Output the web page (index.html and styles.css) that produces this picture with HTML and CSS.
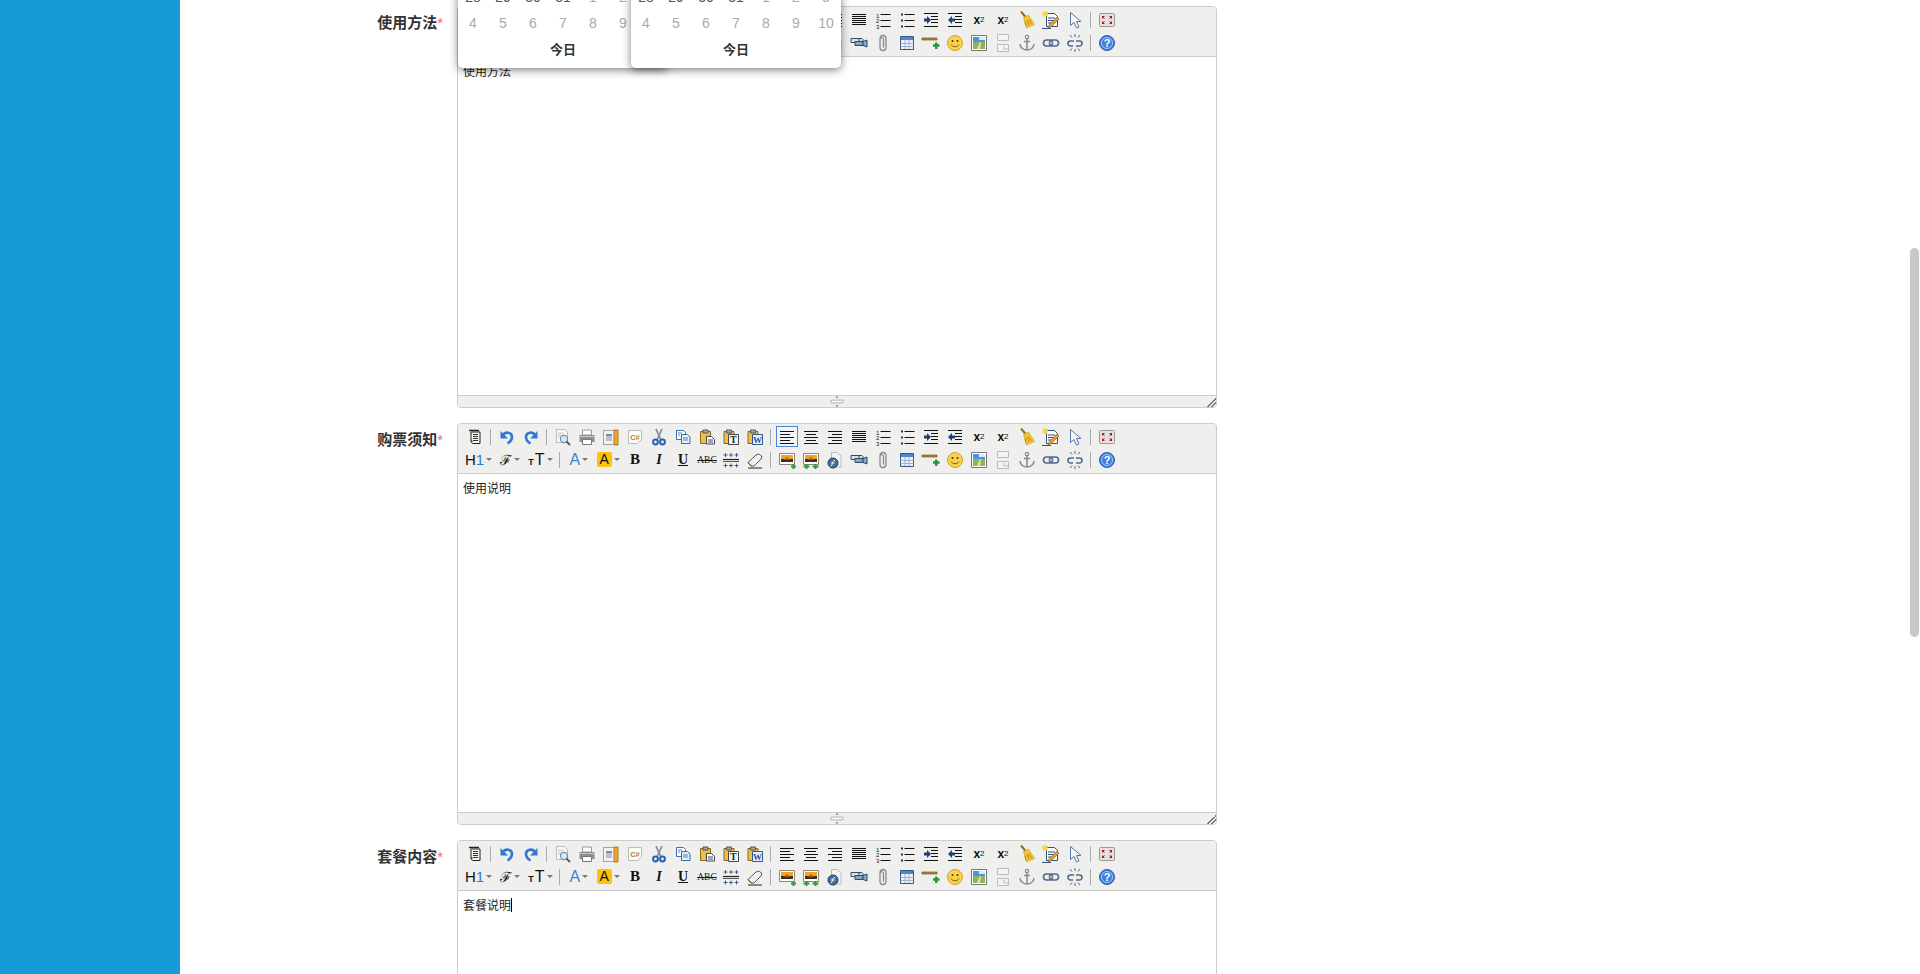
FILE: index.html
```html
<!DOCTYPE html>
<html lang="zh-CN">
<head>
    <meta charset="UTF-8">
    <title>套餐编辑</title>
    <link rel="stylesheet" href="styles.css">
</head>
<body>
    <svg class="icon-defs" xmlns="http://www.w3.org/2000/svg">
        <symbol id="i-source" viewBox="0 0 20 20"><path d="M6 5h9v11.500H7.500L6 15z" fill="#f4f4ee" stroke="#222"/><path d="M4 3.500h10" stroke="#222" stroke-width="1.500"/><path d="M8 7.500h5M8 9.500h5M8 11.500h5M8 13.500h5" stroke="#333"/><path d="M6 12.500l2 2-2 2z" fill="#555"/></symbol>
        <symbol id="i-undo" viewBox="0 0 20 20"><path d="M5.500 8.500c3-4.500 9.500-3.500 9.500 1.500 0 3-2 5-4.500 6.500" fill="none" stroke="#2f7ad0" stroke-width="2.600"/><path d="M3.500 4v7.500h7.500z" fill="#2f7ad0"/></symbol>
        <symbol id="i-redo" viewBox="0 0 20 20"><path d="M14.500 8.500c-3-4.500-9.500-3.500-9.500 1.500 0 3 2 5 4.500 6.500" fill="none" stroke="#2f7ad0" stroke-width="2.600"/><path d="M16.500 4v7.500H9z" fill="#2f7ad0"/></symbol>
        <symbol id="i-preview" viewBox="0 0 20 20"><path d="M3.500 2.500h8l3 3v10h-11z" fill="#fafafa" stroke="#bbb"/><path d="M5 6h6M5 8h4M5 10h3" stroke="#c8c8c8"/><circle cx="11" cy="12" r="3.600" fill="#d8e8f6" stroke="#7790a8" stroke-width="1.200"/><path d="M13.500 14.500l3.500 3.500" stroke="#555" stroke-width="1.800"/></symbol>
        <symbol id="i-print" viewBox="0 0 20 20"><path d="M5.500 3h9v5h-9z" fill="#fff" stroke="#999"/><path d="M2.500 8h15v7h-15z" fill="#8a8f94"/><path d="M3 9.500h14" stroke="#c6c8ca"/><path d="M5.500 12.500h9v5h-9z" fill="#fff" stroke="#777"/></symbol>
        <symbol id="i-template" viewBox="0 0 20 20"><path d="M2.500 3.500h14v14h-14z" fill="#f2f2f2" stroke="#555" stroke-dasharray="1 1"/><path d="M13 3h4v15h-4z" fill="#e8a53a" stroke="#b87a1a"/><path d="M5 7h6v2.500H5z" fill="#6f8fb5"/><path d="M5 11h6M5 13h6" stroke="#7f93ab"/></symbol>
        <symbol id="i-code" viewBox="0 0 20 20"><path d="M3.500 3.500h13v9l-4 4h-9z" fill="#fbfbf8" stroke="#bbb"/><text x="10" y="12.500" text-anchor="middle" font-family="Liberation Sans" font-size="7.500" font-weight="700" fill="#b5823a">C#</text></symbol>
        <symbol id="i-cut" viewBox="0 0 20 20"><path d="M7 2l5 11M13 2L8 13" stroke="#8a8f98" stroke-width="1.800"/><circle cx="6.500" cy="15" r="2.400" fill="none" stroke="#2d5fb0" stroke-width="2"/><circle cx="13.500" cy="15" r="2.400" fill="none" stroke="#2d5fb0" stroke-width="2"/></symbol>
        <symbol id="i-copy" viewBox="0 0 20 20"><path d="M3.500 3.500h7l2 2v7h-9z" fill="#fff" stroke="#3a6db0"/><path d="M8.500 7.500h6l2.500 2.500v6.500H8.500z" fill="#e6f0fa" stroke="#3a6db0"/><path d="M10 11h5M10 13h5M5 6h4M5 8h2" stroke="#4f83c0"/></symbol>
        <symbol id="i-paste" viewBox="0 0 20 20"><path d="M3.500 4.500h10v12h-10z" fill="#e8c04a" stroke="#8a6a1c"/><path d="M6 3h5v3H6z" fill="#aaa" stroke="#555"/><path d="M9.500 9.500h5l3 3v4.500h-8z" fill="#fff" stroke="#445"/><path d="M11 13h5M11 15h5" stroke="#445"/></symbol>
        <symbol id="i-pastetext" viewBox="0 0 20 20"><path d="M3 4.500h10v12H3z" fill="#e8c04a" stroke="#8a6a1c"/><path d="M5.500 3h5v3h-5z" fill="#aaa" stroke="#555"/><path d="M7.500 7.500h10v10h-10z" fill="#f4f4f4" stroke="#445"/><text x="12.500" y="16" text-anchor="middle" font-family="Liberation Serif" font-size="9.500" font-weight="700" fill="#222">T</text></symbol>
        <symbol id="i-pasteword" viewBox="0 0 20 20"><path d="M3 4.500h10v12H3z" fill="#e8c04a" stroke="#8a6a1c"/><path d="M5.500 3h5v3h-5z" fill="#aaa" stroke="#555"/><path d="M7.500 7.500h10v10h-10z" fill="#e8eef8" stroke="#34588c"/><text x="12.500" y="16" text-anchor="middle" font-family="Liberation Serif" font-size="9" font-weight="700" fill="#1f55b0">W</text></symbol>
        <symbol id="i-left" viewBox="0 0 20 20"><path d="M3 4.500h14M3 7.500h10M3 10.500h14M3 13.500h10M3 16.500h14" stroke="#111"/></symbol>
        <symbol id="i-center" viewBox="0 0 20 20"><path d="M3 4.500h14M5 7.500h10M3 10.500h14M5 13.500h10M3 16.500h14" stroke="#111"/></symbol>
        <symbol id="i-right" viewBox="0 0 20 20"><path d="M3 4.500h14M7 7.500h10M3 10.500h14M7 13.500h10M3 16.500h14" stroke="#111"/></symbol>
        <symbol id="i-justify" viewBox="0 0 20 20"><path d="M3 4.500h14M3 6.500h14M3 8.500h14M3 10.500h14M3 12.500h14M3 14.500h14" stroke="#111"/></symbol>
        <symbol id="i-ol" viewBox="0 0 20 20"><text x="3" y="7.500" font-family="Liberation Sans" font-size="6" fill="#111">1</text><text x="3" y="13" font-family="Liberation Sans" font-size="6" fill="#111">2</text><text x="3" y="18.500" font-family="Liberation Sans" font-size="6" fill="#111">3</text><path d="M7.500 4.500h10M7.500 10.500h10M7.500 16.500h10" stroke="#111"/></symbol>
        <symbol id="i-ul" viewBox="0 0 20 20"><path d="M4 3.500h2v2H4zM4 9.500h2v2H4zM4 15.500h2v2H4z" fill="#333"/><path d="M7.500 4.500h10M7.500 10.500h10M7.500 16.500h10" stroke="#111"/></symbol>
        <symbol id="i-indent" viewBox="0 0 20 20"><path d="M3 3.500h14M10 6.500h7M10 9.500h7M10 12.500h7M3 16.500h14" stroke="#111"/><path d="M3 8.500h3V6l4 4-4 4v-2.500H3z" fill="#20407a"/></symbol>
        <symbol id="i-outdent" viewBox="0 0 20 20"><path d="M3 3.500h14M10 6.500h7M10 9.500h7M10 12.500h7M3 16.500h14" stroke="#111"/><path d="M10 8.500H7V6l-4 4 4 4v-2.500h3z" fill="#20407a"/></symbol>
        <symbol id="i-clean" viewBox="0 0 20 20"><path d="M4 1.500l5 6" stroke="#9a6a2a" stroke-width="2"/><path d="M6.500 7.500l5-2.500 6 9.500-8 3.500z" fill="#f2c52e" stroke="#c79a1c" stroke-width=".6"/><path d="M9 16l-1-4M12 15l-2-5M14.500 14l-2.500-4" stroke="#b98a18"/></symbol>
        <symbol id="i-edit" viewBox="0 0 20 20"><path d="M5.500 3.500h8l3 3v10h-11z" fill="#fbfbf6" stroke="#34507c"/><path d="M7 8h7M7 10.500h6M7 13h4" stroke="#34507c"/><path d="M1.500 1.500h5v5h-5z" fill="#f5d94a"/><path d="M8 15l8-8 2 2-8 8-3 1z" fill="#e39a3a" stroke="#8a5a1a" stroke-width=".6"/><path d="M1 18.500h9" stroke="#34507c"/></symbol>
        <symbol id="i-cursor" viewBox="0 0 20 20"><path d="M5.500 2.500v13l3.500-3 2.500 5.500 2.500-1-2.500-5.500h4.500z" fill="#f2f5fa" stroke="#5c76a5"/></symbol>
        <symbol id="i-fullscreen" viewBox="0 0 20 20"><rect x="2.500" y="3.500" width="15" height="13" rx="1" fill="#e2e2e2" stroke="#999"/><path d="M5 6.500l2.500 2M12.500 8.500l2.500-2M5 13.500l2.500-2M15 13.500l-2.500-2" stroke="#b01818"/><path d="M5 6h3L5 9zM15 6h-3l3 3zM5 14h3l-3-3zM15 14h-3l3-3z" fill="#b01818"/></symbol>
        <symbol id="i-eraser" viewBox="0 0 20 20"><path d="M3 12.500L11 5c1.500-1 3-1 4.500 0s1.500 3 .5 4l-7 7H6z" fill="#eef1f6" stroke="#555"/><path d="M3 12.500L6.500 16" stroke="#555"/><path d="M3 18h14" stroke="#222"/></symbol>
        <symbol id="i-grid" viewBox="0 0 20 20"><path d="M2 9.500h16" stroke="#222" stroke-width="1.200"/><path d="M2 11.500h16" stroke="#555"/><path d="M4.500 3v4M2.500 5h4M10 3v4M8 5h4M15.500 3v4M13.500 5h4M4.500 13.500v4M2.500 15.500h4M10 13.500v4M8 15.500h4M15.500 13.500v4M13.500 15.500h4" stroke="#20407a" stroke-width=".8"/></symbol>
        <symbol id="i-image" viewBox="0 0 20 20"><path d="M2.500 3.500h15v11h-15z" fill="#fff" stroke="#888"/><path d="M4 5h12v4H4z" fill="#f4a21e"/><path d="M4 9h12v3H4z" fill="#332"/><path d="M7 10l3-3 3 3z" fill="#c8501a"/><path d="M14 16.500h5M16.500 14v5" stroke="#2e9a2e" stroke-width="2"/></symbol>
        <symbol id="i-multi" viewBox="0 0 20 20"><path d="M2.500 3.500h15v11h-15z" fill="#fff" stroke="#888"/><path d="M4 5h12v4H4z" fill="#f4a21e"/><path d="M4 9h12v3H4z" fill="#332"/><path d="M7 10l3-3 3 3z" fill="#c8501a"/><path d="M2.500 16.500h6M5.500 14v5M11.500 16.500h6M14.500 14v5" stroke="#2e9a2e" stroke-width="2"/></symbol>
        <symbol id="i-flash" viewBox="0 0 20 20"><path d="M6.500 2.500h6l3.500 3.500v11H6.500z" fill="#f4f4f4" stroke="#bbb"/><circle cx="8" cy="13" r="5" fill="#3f6f9e" stroke="#1e3f66"/><path d="M10 10.500c-2 0-2 1.500-2.500 3s-1 2.500-2 2.500M6 13h3.500" stroke="#fff" fill="none"/></symbol>
        <symbol id="i-video" viewBox="0 0 20 20"><path d="M2 5.500h11l1 1v2H6v1H2z" fill="#d9e2ea" stroke="#2c4d72"/><path d="M6 8.500h8v4H6z" fill="#8ba6c0" stroke="#2c4d72"/><path d="M14 8.500l4-1.500v7l-4-1.500z" fill="#8ba6c0" stroke="#2c4d72"/><circle cx="10" cy="7" r="1" fill="#3ca04a"/></symbol>
        <symbol id="i-attach" viewBox="0 0 20 20"><path d="M7 5.500c0-4 6-4 6 0v9c0 4-6 4-6 0V6.500c0-2.500 3.500-2.500 3.500 0v8" fill="none" stroke="#888" stroke-width="1.300"/></symbol>
        <symbol id="i-table" viewBox="0 0 20 20"><path d="M3.500 3.500h13v13h-13z" fill="#eef2f8" stroke="#34588c"/><path d="M4 4h12v3H4z" fill="#4f86cf"/><path d="M3.500 10.500h13M3.500 13.500h13M8 7v9M12 7v9" stroke="#9db3cf"/></symbol>
        <symbol id="i-hr" viewBox="0 0 20 20"><path d="M1 5h15v2H1z" fill="#b58a3c" stroke="#5a4318" stroke-width=".6"/><path d="M12 12.500h6.500M15.250 9.500v6.500" stroke="#1f9a2c" stroke-width="2.400"/></symbol>
        <symbol id="i-emoji" viewBox="0 0 20 20"><circle cx="10" cy="10" r="7.500" fill="#f8d24a" stroke="#d9a126"/><circle cx="7.500" cy="8" r="1" fill="#333"/><circle cx="12.500" cy="8" r="1" fill="#333"/><path d="M6 11.500c1.500 3 6.500 3 8 0" fill="none" stroke="#8a5a12"/></symbol>
        <symbol id="i-map" viewBox="0 0 20 20"><path d="M2.500 2.500h15v15h-15z" fill="#fff" stroke="#777"/><path d="M4 4h12v12H4z" fill="#8db65a"/><path d="M4 4h12v5H4z" fill="#4f94dc"/><path d="M10 4h6v3h-6z" fill="#dfeaf6"/><path d="M8 16l3-7h1l-1 7z" fill="#e8e2b8"/></symbol>
        <symbol id="i-pagebreak" viewBox="0 0 20 20"><path d="M4.500 1.500h11v6h-11z" fill="#f4f4f4" stroke="#bbb"/><path d="M4.500 11.500h11v7h-11z" fill="#f4f4f4" stroke="#bbb"/><path d="M11 13v3h4.500" fill="none" stroke="#bbb"/></symbol>
        <symbol id="i-anchor" viewBox="0 0 20 20"><circle cx="10" cy="4" r="1.700" fill="none" stroke="#8b8b8b" stroke-width="1.200"/><path d="M10 6v11M7 8.500h6M3 11c0 4 4 6 7 6s7-2 7-6" fill="none" stroke="#8b8b8b" stroke-width="1.500"/></symbol>
        <symbol id="i-link" viewBox="0 0 20 20"><rect x="2.500" y="7" width="9" height="6" rx="3" fill="none" stroke="#52688a" stroke-width="1.600"/><rect x="8.500" y="7" width="9" height="6" rx="3" fill="none" stroke="#52688a" stroke-width="1.600"/><path d="M7 10h6" stroke="#a9b8cc"/></symbol>
        <symbol id="i-unlink" viewBox="0 0 20 20"><path d="M9 8H5.500a2.500 2.500 0 000 5H8M11 8h3.500a2.500 2.500 0 010 5H11" fill="none" stroke="#52688a" stroke-width="1.600"/><path d="M10 1v3M10 16v3M5 2l2 2.500M15 2l-2 2.500M5 18l2-2.500M15 18l-2-2.500" stroke="#52688a"/></symbol>
        <symbol id="i-help" viewBox="0 0 20 20"><circle cx="10" cy="10" r="7.500" fill="#3f7ee0" stroke="#2a5cb0"/><circle cx="10" cy="10" r="5.500" fill="none" stroke="#a8c8f4"/><text x="10" y="14" text-anchor="middle" font-family="Liberation Sans" font-size="11" font-weight="700" fill="#fff">?</text></symbol>
        <symbol id="i-scale" viewBox="0 0 16 12"><path d="M8 0l1.500 2h-3zM8 12l-1.500-2h3z" fill="#666"/><path d="M1.500 4.500h13v3h-13z" fill="#fff" stroke="#aaa"/></symbol>
    </svg>

    <aside class="sidebar"></aside>

    <main class="content">
        <div class="form-row">
            <label class="form-label">使用方法<span class="required">*</span></label>
            <div class="editor">
                <div class="toolbar">
                    <div class="toolbar-row">
                        <span class="btn"><svg><use href="#i-source"/></svg></span><span class="sep"></span>
                        <span class="btn"><svg><use href="#i-undo"/></svg></span><span class="btn"><svg><use href="#i-redo"/></svg></span><span class="sep"></span>
                        <span class="btn"><svg><use href="#i-preview"/></svg></span><span class="btn"><svg><use href="#i-print"/></svg></span><span class="btn"><svg><use href="#i-template"/></svg></span><span class="btn"><svg><use href="#i-code"/></svg></span><span class="btn"><svg><use href="#i-cut"/></svg></span><span class="btn"><svg><use href="#i-copy"/></svg></span><span class="btn"><svg><use href="#i-paste"/></svg></span><span class="btn"><svg><use href="#i-pastetext"/></svg></span><span class="btn"><svg><use href="#i-pasteword"/></svg></span><span class="sep"></span>
                        <span class="btn"><svg><use href="#i-left"/></svg></span><span class="btn"><svg><use href="#i-center"/></svg></span><span class="btn"><svg><use href="#i-right"/></svg></span><span class="btn"><svg><use href="#i-justify"/></svg></span><span class="btn"><svg><use href="#i-ol"/></svg></span><span class="btn"><svg><use href="#i-ul"/></svg></span><span class="btn"><svg><use href="#i-indent"/></svg></span><span class="btn"><svg><use href="#i-outdent"/></svg></span>
                        <span class="btn txt-script">x<sub>2</sub></span><span class="btn txt-script">x<sup>2</sup></span><span class="btn"><svg><use href="#i-clean"/></svg></span><span class="btn"><svg><use href="#i-edit"/></svg></span><span class="btn"><svg><use href="#i-cursor"/></svg></span><span class="sep"></span>
                        <span class="btn"><svg><use href="#i-fullscreen"/></svg></span>
                    </div>
                    <div class="toolbar-row">
                        <span class="btn btn-wide"><span class="txt-h1">H<em>1</em></span><i class="arrow"></i></span><span class="btn btn-wide"><span class="txt-font">ℱ</span><i class="arrow"></i></span><span class="btn btn-wide"><span class="txt-size"><small>T</small>T</span><i class="arrow"></i></span><span class="sep"></span>
                        <span class="btn btn-color"><span class="txt-color">A</span><i class="arrow"></i></span><span class="btn btn-color"><span class="txt-hilite">A</span><i class="arrow"></i></span>
                        <span class="btn txt-b">B</span><span class="btn txt-i">I</span><span class="btn txt-u">U</span><span class="btn txt-abc">ABC</span><span class="btn"><svg><use href="#i-grid"/></svg></span><span class="btn"><svg><use href="#i-eraser"/></svg></span><span class="sep"></span>
                        <span class="btn"><svg><use href="#i-image"/></svg></span><span class="btn"><svg><use href="#i-multi"/></svg></span><span class="btn"><svg><use href="#i-flash"/></svg></span><span class="btn"><svg><use href="#i-video"/></svg></span><span class="btn"><svg><use href="#i-attach"/></svg></span><span class="btn"><svg><use href="#i-table"/></svg></span><span class="btn"><svg><use href="#i-hr"/></svg></span><span class="btn"><svg><use href="#i-emoji"/></svg></span><span class="btn"><svg><use href="#i-map"/></svg></span><span class="btn"><svg><use href="#i-pagebreak"/></svg></span><span class="btn"><svg><use href="#i-anchor"/></svg></span><span class="btn"><svg><use href="#i-link"/></svg></span><span class="btn"><svg><use href="#i-unlink"/></svg></span><span class="sep"></span>
                        <span class="btn"><svg><use href="#i-help"/></svg></span>
                    </div>
                </div>
                <div class="editor-body">使用方法</div>
                <div class="statusbar"><svg class="scale-icon"><use href="#i-scale"/></svg><i class="resize-corner"></i></div>
            </div>
        </div>

        <div class="form-row">
            <label class="form-label">购票须知<span class="required">*</span></label>
            <div class="editor">
                <div class="toolbar">
                    <div class="toolbar-row">
                        <span class="btn"><svg><use href="#i-source"/></svg></span><span class="sep"></span>
                        <span class="btn"><svg><use href="#i-undo"/></svg></span><span class="btn"><svg><use href="#i-redo"/></svg></span><span class="sep"></span>
                        <span class="btn"><svg><use href="#i-preview"/></svg></span><span class="btn"><svg><use href="#i-print"/></svg></span><span class="btn"><svg><use href="#i-template"/></svg></span><span class="btn"><svg><use href="#i-code"/></svg></span><span class="btn"><svg><use href="#i-cut"/></svg></span><span class="btn"><svg><use href="#i-copy"/></svg></span><span class="btn"><svg><use href="#i-paste"/></svg></span><span class="btn"><svg><use href="#i-pastetext"/></svg></span><span class="btn"><svg><use href="#i-pasteword"/></svg></span><span class="sep"></span>
                        <span class="btn btn-active"><svg><use href="#i-left"/></svg></span><span class="btn"><svg><use href="#i-center"/></svg></span><span class="btn"><svg><use href="#i-right"/></svg></span><span class="btn"><svg><use href="#i-justify"/></svg></span><span class="btn"><svg><use href="#i-ol"/></svg></span><span class="btn"><svg><use href="#i-ul"/></svg></span><span class="btn"><svg><use href="#i-indent"/></svg></span><span class="btn"><svg><use href="#i-outdent"/></svg></span>
                        <span class="btn txt-script">x<sub>2</sub></span><span class="btn txt-script">x<sup>2</sup></span><span class="btn"><svg><use href="#i-clean"/></svg></span><span class="btn"><svg><use href="#i-edit"/></svg></span><span class="btn"><svg><use href="#i-cursor"/></svg></span><span class="sep"></span>
                        <span class="btn"><svg><use href="#i-fullscreen"/></svg></span>
                    </div>
                    <div class="toolbar-row">
                        <span class="btn btn-wide"><span class="txt-h1">H<em>1</em></span><i class="arrow"></i></span><span class="btn btn-wide"><span class="txt-font">ℱ</span><i class="arrow"></i></span><span class="btn btn-wide"><span class="txt-size"><small>T</small>T</span><i class="arrow"></i></span><span class="sep"></span>
                        <span class="btn btn-color"><span class="txt-color">A</span><i class="arrow"></i></span><span class="btn btn-color"><span class="txt-hilite">A</span><i class="arrow"></i></span>
                        <span class="btn txt-b">B</span><span class="btn txt-i">I</span><span class="btn txt-u">U</span><span class="btn txt-abc">ABC</span><span class="btn"><svg><use href="#i-grid"/></svg></span><span class="btn"><svg><use href="#i-eraser"/></svg></span><span class="sep"></span>
                        <span class="btn"><svg><use href="#i-image"/></svg></span><span class="btn"><svg><use href="#i-multi"/></svg></span><span class="btn"><svg><use href="#i-flash"/></svg></span><span class="btn"><svg><use href="#i-video"/></svg></span><span class="btn"><svg><use href="#i-attach"/></svg></span><span class="btn"><svg><use href="#i-table"/></svg></span><span class="btn"><svg><use href="#i-hr"/></svg></span><span class="btn"><svg><use href="#i-emoji"/></svg></span><span class="btn"><svg><use href="#i-map"/></svg></span><span class="btn"><svg><use href="#i-pagebreak"/></svg></span><span class="btn"><svg><use href="#i-anchor"/></svg></span><span class="btn"><svg><use href="#i-link"/></svg></span><span class="btn"><svg><use href="#i-unlink"/></svg></span><span class="sep"></span>
                        <span class="btn"><svg><use href="#i-help"/></svg></span>
                    </div>
                </div>
                <div class="editor-body">使用说明</div>
                <div class="statusbar"><svg class="scale-icon"><use href="#i-scale"/></svg><i class="resize-corner"></i></div>
            </div>
        </div>

        <div class="form-row">
            <label class="form-label">套餐内容<span class="required">*</span></label>
            <div class="editor">
                <div class="toolbar">
                    <div class="toolbar-row">
                        <span class="btn"><svg><use href="#i-source"/></svg></span><span class="sep"></span>
                        <span class="btn"><svg><use href="#i-undo"/></svg></span><span class="btn"><svg><use href="#i-redo"/></svg></span><span class="sep"></span>
                        <span class="btn"><svg><use href="#i-preview"/></svg></span><span class="btn"><svg><use href="#i-print"/></svg></span><span class="btn"><svg><use href="#i-template"/></svg></span><span class="btn"><svg><use href="#i-code"/></svg></span><span class="btn"><svg><use href="#i-cut"/></svg></span><span class="btn"><svg><use href="#i-copy"/></svg></span><span class="btn"><svg><use href="#i-paste"/></svg></span><span class="btn"><svg><use href="#i-pastetext"/></svg></span><span class="btn"><svg><use href="#i-pasteword"/></svg></span><span class="sep"></span>
                        <span class="btn"><svg><use href="#i-left"/></svg></span><span class="btn"><svg><use href="#i-center"/></svg></span><span class="btn"><svg><use href="#i-right"/></svg></span><span class="btn"><svg><use href="#i-justify"/></svg></span><span class="btn"><svg><use href="#i-ol"/></svg></span><span class="btn"><svg><use href="#i-ul"/></svg></span><span class="btn"><svg><use href="#i-indent"/></svg></span><span class="btn"><svg><use href="#i-outdent"/></svg></span>
                        <span class="btn txt-script">x<sub>2</sub></span><span class="btn txt-script">x<sup>2</sup></span><span class="btn"><svg><use href="#i-clean"/></svg></span><span class="btn"><svg><use href="#i-edit"/></svg></span><span class="btn"><svg><use href="#i-cursor"/></svg></span><span class="sep"></span>
                        <span class="btn"><svg><use href="#i-fullscreen"/></svg></span>
                    </div>
                    <div class="toolbar-row">
                        <span class="btn btn-wide"><span class="txt-h1">H<em>1</em></span><i class="arrow"></i></span><span class="btn btn-wide"><span class="txt-font">ℱ</span><i class="arrow"></i></span><span class="btn btn-wide"><span class="txt-size"><small>T</small>T</span><i class="arrow"></i></span><span class="sep"></span>
                        <span class="btn btn-color"><span class="txt-color">A</span><i class="arrow"></i></span><span class="btn btn-color"><span class="txt-hilite">A</span><i class="arrow"></i></span>
                        <span class="btn txt-b">B</span><span class="btn txt-i">I</span><span class="btn txt-u">U</span><span class="btn txt-abc">ABC</span><span class="btn"><svg><use href="#i-grid"/></svg></span><span class="btn"><svg><use href="#i-eraser"/></svg></span><span class="sep"></span>
                        <span class="btn"><svg><use href="#i-image"/></svg></span><span class="btn"><svg><use href="#i-multi"/></svg></span><span class="btn"><svg><use href="#i-flash"/></svg></span><span class="btn"><svg><use href="#i-video"/></svg></span><span class="btn"><svg><use href="#i-attach"/></svg></span><span class="btn"><svg><use href="#i-table"/></svg></span><span class="btn"><svg><use href="#i-hr"/></svg></span><span class="btn"><svg><use href="#i-emoji"/></svg></span><span class="btn"><svg><use href="#i-map"/></svg></span><span class="btn"><svg><use href="#i-pagebreak"/></svg></span><span class="btn"><svg><use href="#i-anchor"/></svg></span><span class="btn"><svg><use href="#i-link"/></svg></span><span class="btn"><svg><use href="#i-unlink"/></svg></span><span class="sep"></span>
                        <span class="btn"><svg><use href="#i-help"/></svg></span>
                    </div>
                </div>
                <div class="editor-body">套餐说明<span class="caret"></span></div>
                <div class="statusbar"><svg class="scale-icon"><use href="#i-scale"/></svg><i class="resize-corner"></i></div>
            </div>
        </div>
    </main>

    <!-- date pickers left open, they hang over the first editor -->
    <div class="date-popup date-popup-start">
        <div class="date-row"><span class="in-month">28</span><span class="in-month">29</span><span class="in-month">30</span><span class="in-month">31</span><span>1</span><span>2</span><span></span></div>
        <div class="date-row"><span>4</span><span>5</span><span>6</span><span>7</span><span>8</span><span>9</span><span></span></div>
        <div class="date-today">今日</div>
    </div>
    <div class="date-popup date-popup-end">
        <div class="date-row"><span class="in-month">28</span><span class="in-month">29</span><span class="in-month">30</span><span class="in-month">31</span><span>1</span><span>2</span><span>3</span></div>
        <div class="date-row"><span>4</span><span>5</span><span>6</span><span>7</span><span>8</span><span>9</span><span>10</span></div>
        <div class="date-today">今日</div>
    </div>

    <div class="scroll-thumb"></div>
</body>
</html>
```

FILE: styles.css
```css
html, body {
    height: 100%;
    margin: 0;
    overflow: hidden;
}

body {
    display: flex;
    background-color: #fff;
    color: #333;
    font-family: "Liberation Sans", "Noto Sans CJK SC", sans-serif;
}

.icon-defs {
    display: none;
}

.sidebar {
    flex: 0 0 180px;
    background-color: #179bd7;
}

.content {
    flex: 1;
    padding-top: 6px;
}

.form-row {
    display: flex;
    margin-bottom: 15px;
}

.form-label {
    width: 263px;
    padding: 7px 14px 0 0;
    text-align: right;
    font-size: 15px;
    line-height: 20px;
    font-weight: 700;
}

.required {
    color: #f0696f;
    font-weight: 400;
}

/* editor */
.editor {
    display: flex;
    flex-direction: column;
    box-sizing: border-box;
    flex: none;
    width: 760px;
    height: 402px;
    border: 1px solid #ccc;
    border-radius: 4px;
}

.toolbar {
    height: 50px;
    box-sizing: border-box;
    padding: 1px 0 0 5px;
    background-color: #efefed;
    border-bottom: 1px solid #ccc;
    border-radius: 4px 4px 0 0;
}

.toolbar-row {
    display: flex;
    align-items: center;
    height: 23px;
}

.btn {
    display: flex;
    flex: none;
    align-items: center;
    justify-content: center;
    width: 24px;
    height: 23px;
    box-sizing: border-box;
    color: #111;
}

.btn svg {
    width: 20px;
    height: 20px;
}

.btn-wide {
    width: 31px;
}

.btn-color {
    width: 29.5px;
}

.btn-active {
    position: relative;
}

.btn-active::before {
    content: "";
    position: absolute;
    top: 1px;
    left: 1px;
    right: 1px;
    bottom: 1px;
    border: 1px solid #4a86d0;
    background-color: #f2f5fa;
}

.btn-active svg {
    position: relative;
}

.sep {
    flex: none;
    width: 1px;
    height: 16px;
    margin: 0 4px 0 3px;
    background-color: #aaa;
}

.arrow {
    flex: none;
    width: 0;
    height: 0;
    margin-left: 2px;
    border-top: 3px solid #777;
    border-left: 3px solid transparent;
    border-right: 3px solid transparent;
}

.txt-h1 {
    font-size: 15px;
}

.txt-h1 em {
    font-style: normal;
    color: #2f7ad0;
}

.txt-font {
    font-family: "DejaVu Serif", serif;
    font-size: 14px;
}

.txt-size {
    font-size: 16px;
}

.txt-size small {
    font-size: 9px;
    font-weight: 700;
    margin-right: 1px;
}

.txt-color {
    font-size: 16px;
    color: #3d7fe0;
}

.txt-hilite {
    width: 15px;
    height: 15px;
    border-radius: 2px;
    background-color: #fcc30b;
    font-size: 14px;
    line-height: 15px;
    text-align: center;
}

.txt-b, .txt-i, .txt-u {
    font-family: "Liberation Serif", serif;
    font-size: 14px;
    font-weight: 700;
}

.txt-b {
    font-size: 15px;
}

.txt-i {
    font-style: italic;
}

.txt-u {
    text-decoration: underline;
}

.txt-abc {
    font-family: "Liberation Serif", serif;
    font-size: 9.5px;
    text-decoration: line-through;
}

.txt-script {
    font-size: 12px;
    font-weight: 700;
}

.txt-script sub, .txt-script sup {
    font-size: 8px;
    font-weight: 400;
    line-height: 0;
}

.editor-body {
    flex: 1;
    padding: 5px 5px 0;
    background-color: #fff;
    font-family: "Noto Sans CJK SC", sans-serif;
    font-size: 12px;
    line-height: 17px;
    color: #222;
}

.caret {
    display: inline-block;
    width: 1px;
    height: 14px;
    vertical-align: -2px;
    background-color: #000;
}

.statusbar {
    position: relative;
    display: flex;
    align-items: center;
    justify-content: center;
    height: 11px;
    background-color: #efefed;
    border-top: 1px solid #ccc;
    border-radius: 0 0 4px 4px;
}

.scale-icon {
    width: 16px;
    height: 11px;
}

.resize-corner {
    position: absolute;
    right: 0;
    bottom: 0;
    width: 9px;
    height: 9px;
    background: linear-gradient(135deg, transparent 50%, #777 50%, #777 58%, transparent 58%, transparent 72%, #777 72%, #777 80%, transparent 80%);
}

/* date popups */
.date-popup {
    position: absolute;
    top: -16px;
    width: 210px;
    background-color: #fff;
    border-radius: 5px;
    box-shadow: 0 2px 8px rgba(0, 0, 0, 0.5);
}

.date-popup-start {
    left: 458px;
}

.date-popup-end {
    left: 631px;
}

.date-row {
    display: grid;
    grid-template-columns: repeat(7, 30px);
    height: 26px;
    line-height: 26px;
    text-align: center;
    font-size: 14px;
    color: #aaa;
}

.date-row .in-month {
    color: #555;
}

.date-today {
    height: 32px;
    line-height: 26px;
    text-align: center;
    font-family: "Noto Sans CJK SC", sans-serif;
    font-size: 13px;
    font-weight: 700;
}

.scroll-thumb {
    position: absolute;
    top: 248px;
    right: 1px;
    width: 9px;
    height: 389px;
    border-radius: 5px;
    background-color: #c8c8c8;
}
```
